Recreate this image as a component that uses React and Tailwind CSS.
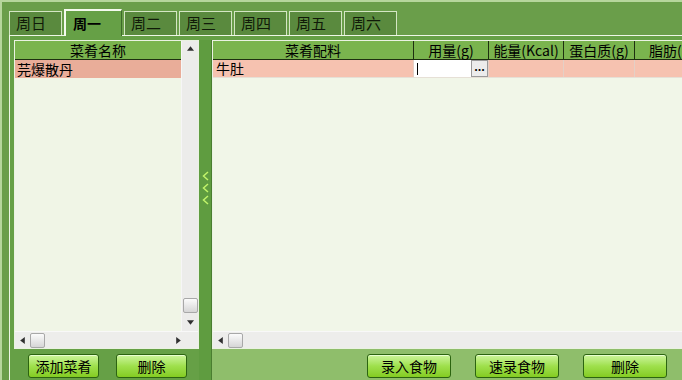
import React from 'react';

const font = "font-['Noto_Sans_CJK_SC',sans-serif]";

const Tab = ({ label, active }) =>
  active ? (
    <div className="w-[58px] h-[27px] mr-[2px] -mb-px z-10 flex items-center pl-[7px] bg-[#66a046] border-t-2 border-l-2 border-r border-t-[#f4faee] border-l-[#f4faee] border-r-[#3c6a28] text-[14px] font-bold text-black">
      {label}
    </div>
  ) : (
    <div className="w-[53px] h-[24px] mr-[2px] flex items-center pl-[6px] bg-[#5a8a3e] border-t border-l border-r border-t-[#d4e6c4] border-l-[#d4e6c4] border-r-[#d4e6c4] text-[15px] text-[#101a08]">
      {label}
    </div>
  );

const Btn = ({ children, w }) => (
  <div className={`${w} h-[24px] flex items-center justify-center rounded-[3px] border border-[#2c6410] bg-gradient-to-b from-[#cdf59a] via-[#9fe04c] to-[#84cc20] text-[14px] text-black shadow-[inset_0_1px_0_#e8ffd0]`}>
    {children}
  </div>
);

const Arrow = ({ dir }) => {
  const pts = {
    up: '0,4 3,0 6,4',
    down: '0,0 3,4 6,0',
    left: '4,0 0,3 4,6',
    right: '0,0 4,3 0,6',
  }[dir];
  const vert = dir === 'up' || dir === 'down';
  return (
    <svg width={vert ? 7 : 5} height={vert ? 5 : 7} viewBox={vert ? '0 0 6 4' : '0 0 4 6'}>
      <polygon points={pts} fill="#303030" />
    </svg>
  );
};

const Thumb = () => (
  <div className="w-[15px] h-[15px] shrink-0 rounded-[2px] border border-[#a8a8a8] bg-gradient-to-b from-[#fbfbfb] to-[#d6d6d6]" />
);

const HScroll = ({ right }) => (
  <div className="h-[17px] flex items-center bg-[#ededeb] border-t border-[#f8f8f8]">
    <div className="w-[15px] flex justify-center"><Arrow dir="left" /></div>
    <Thumb />
    <div className="flex-1" />
    {right && <div className="w-[26px] flex justify-start pl-[4px]"><Arrow dir="right" /></div>}
  </div>
);

export default function App() {
  return (
    <div className={`${font} w-[682px] h-[380px] overflow-hidden flex flex-col bg-[#6a9e4a] border-t-2 border-l-2 border-[#b6d69c]`}>
      <div className="h-[6px]" />
      {/* tabs */}
      <div className="flex items-end pl-[7px] h-[27px]">
        <Tab label="周日" />
        <Tab label="周一" active />
        <Tab label="周二" />
        <Tab label="周三" />
        <Tab label="周四" />
        <Tab label="周五" />
        <Tab label="周六" />
      </div>

      {/* tab page */}
      <div className="flex-1 min-h-0 ml-[7px] flex bg-[#66a046] border-t border-l border-[#eef6e6] pt-[4px] pl-[4px]">
        {/* left column */}
        <div className="w-[185px] shrink-0 flex flex-col">
          <div className="h-[309px] flex flex-col border border-[#eaf2e2] bg-[#f0f5e6]">
            <div className="flex-1 flex">
              <div className="flex-1 flex flex-col">
                <div className="h-[19px] flex items-center justify-center bg-[#7ab44e] border-b border-[#1e3010] text-[14px] text-black">
                  菜肴名称
                </div>
                <div className="h-[18px] flex items-center pl-[2px] bg-[#e9ad99] text-[14px] text-black">芫爆散丹</div>
              </div>
              <div className="w-[17px] flex flex-col items-center bg-[#ececea] border-l border-[#f6f6f6]">
                <div className="h-[14px] flex items-center"><Arrow dir="up" /></div>
                <div className="flex-1" />
                <Thumb />
                <div className="h-[18px] flex items-center"><Arrow dir="down" /></div>
              </div>
            </div>
            <HScroll right />
          </div>
          <div className="flex pt-[5px] pl-[14px] gap-[17px]">
            <Btn w="w-[71px]">添加菜肴</Btn>
            <Btn w="w-[71px]">删除</Btn>
          </div>
        </div>

        {/* splitter */}
        <div className="w-[13px] shrink-0 flex flex-col items-center justify-center gap-[2px] pb-[44px] bg-[#5f9c40] border-r border-[#4a7e30]">
          {[0, 1, 2].map((i) => (
            <svg key={i} width="7" height="10" viewBox="0 0 7 10">
              <polyline points="6,1 1.5,5 6,9" fill="none" stroke="#c2f46a" strokeWidth="1.5" />
            </svg>
          ))}
        </div>

        {/* right column */}
        <div className="flex-1 min-w-0 overflow-hidden flex flex-col">
          <div className="h-[309px] flex flex-col border border-[#eaf2e2] border-r-0 bg-[#f1f6e8]">
            <div className="flex-1 flex flex-col">
              <div className="h-[19px] flex bg-[#7ab44e] border-b border-[#1e3010] text-[14px] text-black whitespace-nowrap">
                <div className="w-[201px] shrink-0 flex items-center justify-center border-r border-[#1e3010]">菜肴配料</div>
                <div className="w-[75px] shrink-0 flex items-center justify-center border-r border-[#1e3010]">用量(g)</div>
                <div className="w-[75px] shrink-0 flex items-center justify-center border-r border-[#1e3010]">能量(Kcal)</div>
                <div className="w-[71px] shrink-0 flex items-center justify-center border-r border-[#1e3010]">蛋白质(g)</div>
                <div className="w-[80px] shrink-0 flex items-center pl-[14px]">脂肪(g)</div>
              </div>
              <div className="h-[18px] flex bg-[#f6c2b0] text-[14px] text-black border-b border-[#e6e0d6]">
                <div className="w-[201px] shrink-0 flex items-center pl-[3px] border-r border-[#e4d0c6]">牛肚</div>
                <div className="w-[75px] shrink-0 flex items-center bg-white border-r border-[#e4d0c6]">
                  <div className="flex-1 h-full flex items-center pl-[3px]">
                    <div className="w-px h-[12px] bg-black" />
                  </div>
                  <div className="w-[17px] h-[17px] flex items-center justify-center bg-[#ececec] border border-[#9a9a9a] text-[11px] font-bold leading-none pb-[4px]">
                    ...
                  </div>
                </div>
                <div className="w-[75px] shrink-0 border-r border-[#e4d0c6]" />
                <div className="w-[71px] shrink-0 border-r border-[#e4d0c6]" />
                <div className="flex-1" />
              </div>
            </div>
            <HScroll />
          </div>
          <div className="flex-1 flex pt-[5px] pl-[155px] gap-[24px] bg-[#8fbe6b]">
            <Btn w="w-[84px]">录入食物</Btn>
            <Btn w="w-[84px]">速录食物</Btn>
            <Btn w="w-[84px]">删除</Btn>
          </div>
        </div>
      </div>
    </div>
  );
}
